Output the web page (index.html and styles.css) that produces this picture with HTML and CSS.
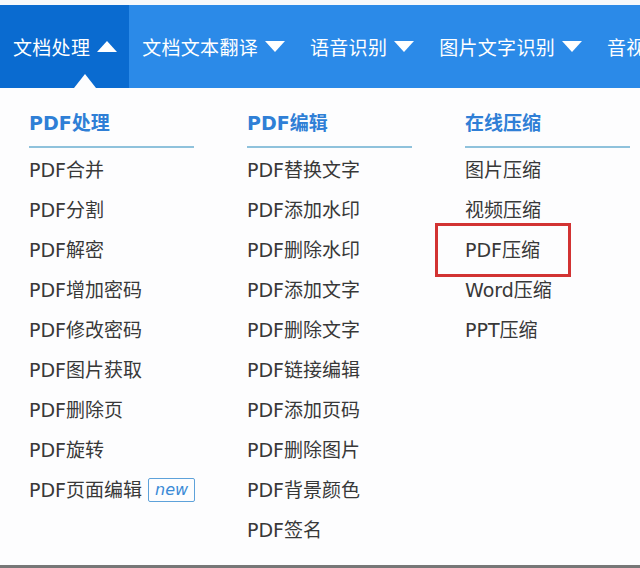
FILE: index.html
```html
<!DOCTYPE html>
<html lang="zh-CN">
<head>
    <meta charset="UTF-8">
    <meta name="viewport" content="width=device-width, initial-scale=1.0">
    <title>文档处理</title>
    <link rel="stylesheet" href="styles.css">
</head>
<body>
    <div class="top-strip"></div>

    <!-- 顶部导航 -->
    <nav class="navbar">
        <div class="nav-item active">
            <span>文档处理</span>
            <svg class="caret" width="20" height="11" viewBox="0 0 20 11"><polygon points="10,0 20,11 0,11" fill="#fff"/></svg>
        </div>
        <div class="nav-item">
            <span>文档文本翻译</span>
            <svg class="caret" width="20" height="11" viewBox="0 0 20 11"><polygon points="0,0 20,0 10,11" fill="#fff"/></svg>
        </div>
        <div class="nav-item">
            <span>语音识别</span>
            <svg class="caret" width="20" height="11" viewBox="0 0 20 11"><polygon points="0,0 20,0 10,11" fill="#fff"/></svg>
        </div>
        <div class="nav-item">
            <span>图片文字识别</span>
            <svg class="caret" width="20" height="11" viewBox="0 0 20 11"><polygon points="0,0 20,0 10,11" fill="#fff"/></svg>
        </div>
        <div class="nav-item last">
            <span>音视</span>
        </div>
    </nav>

    <!-- 下拉菜单 -->
    <div class="dropdown">
        <div class="menu-col">
            <h3>PDF处理</h3>
            <ul>
                <li>PDF合并</li>
                <li>PDF分割</li>
                <li>PDF解密</li>
                <li>PDF增加密码</li>
                <li>PDF修改密码</li>
                <li>PDF图片获取</li>
                <li>PDF删除页</li>
                <li>PDF旋转</li>
                <li>PDF页面编辑<span class="badge">new</span></li>
            </ul>
        </div>
        <div class="menu-col">
            <h3>PDF编辑</h3>
            <ul>
                <li>PDF替换文字</li>
                <li>PDF添加水印</li>
                <li>PDF删除水印</li>
                <li>PDF添加文字</li>
                <li>PDF删除文字</li>
                <li>PDF链接编辑</li>
                <li>PDF添加页码</li>
                <li>PDF删除图片</li>
                <li>PDF背景颜色</li>
                <li>PDF签名</li>
            </ul>
        </div>
        <div class="menu-col">
            <h3>在线压缩</h3>
            <ul>
                <li>图片压缩</li>
                <li>视频压缩</li>
                <li class="marked">PDF压缩</li>
                <li>Word压缩</li>
                <li>PPT压缩</li>
            </ul>
        </div>
    </div>
</body>
</html>
```

FILE: styles.css
```css
* {
    margin: 0;
    padding: 0;
    box-sizing: border-box;
}

body {
    font-family: "DejaVu Sans", "Noto Sans CJK SC", sans-serif;
    background-color: #fff;
    width: 640px;
    height: 568px;
    overflow: hidden;
}

.top-strip {
    height: 5px;
    background-color: #f6f8fb;
}

/* 导航栏 */
.navbar {
    height: 83px;
    background-color: #2b8ae8;
    display: flex;
    align-items: stretch;
    white-space: nowrap;
    overflow: hidden;
}

.nav-item {
    position: relative;
    display: flex;
    align-items: center;
    gap: 7px;
    padding: 0 12px 0 13px;
    color: #fff;
    font-family: "Noto Sans", "Noto Sans CJK SC", sans-serif;
    font-size: 19px;
    flex-shrink: 0;
}

.nav-item span {
    letter-spacing: 0.3px;
}

.nav-item.last {
    padding-right: 0;
}

.nav-item.active {
    background-color: #0a6bd0;
}

/* 指向下拉的小三角 */
.nav-item.active::after {
    content: "";
    position: absolute;
    left: 74px;
    bottom: 0;
    border-left: 11px solid transparent;
    border-right: 11px solid transparent;
    border-bottom: 14px solid #fdfdfe;
}

/* 下拉内容 */
.dropdown {
    height: 480px;
    background-color: #fdfdfe;
    border-bottom: 3px solid #777;
    display: grid;
    grid-template-columns: repeat(3, 165px);
    column-gap: 53px;
    padding: 15px 0 0 29px;
}

.menu-col h3 {
    font-size: 19px;
    font-weight: bold;
    color: #2f7fd6;
    line-height: 40px;
    padding-bottom: 3px;
    border-bottom: 2px solid #8fc2dc;
}

.menu-col ul {
    list-style: none;
    padding-top: 2px;
}

.menu-col li {
    font-size: 19px;
    line-height: 40px;
    color: #383838;
    display: flex;
    align-items: center;
    white-space: nowrap;
}

.badge {
    margin-left: 6px;
    font-size: 16px;
    font-style: italic;
    color: #3a8ad6;
    border: 1px solid #5ea2da;
    border-radius: 2px;
    line-height: 22px;
    padding: 0 6px;
}

/* 红框标注 */
.menu-col li.marked {
    width: 136px;
    margin: -7px 0 -7px -30px;
    padding: 4px 0 4px 27px;
    border: 3px solid #d23333;
}
```
